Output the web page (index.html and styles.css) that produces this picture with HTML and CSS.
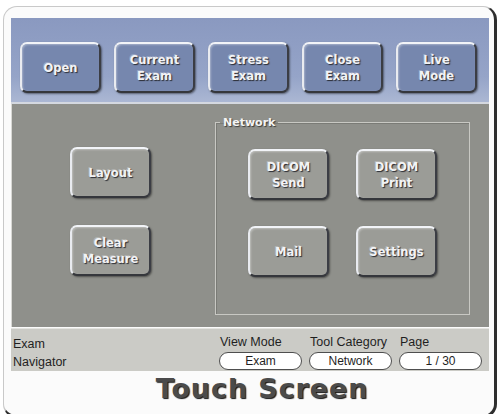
FILE: index.html
```html
<!DOCTYPE html>
<html lang="en">
<head>
    <meta charset="UTF-8">
    <meta name="viewport" content="width=device-width, initial-scale=1.0">
    <title>Touch Screen</title>
    <link rel="stylesheet" href="styles.css">
</head>
<body>

<div class="frame">
    <div class="toolbar">
        <button class="btn blue">Open</button>
        <button class="btn blue">Current<br>Exam</button>
        <button class="btn blue">Stress<br>Exam</button>
        <button class="btn blue">Close<br>Exam</button>
        <button class="btn blue">Live<br>Mode</button>
    </div>

    <div class="workspace">
        <div class="tools">
            <button class="btn gray">Layout</button>
            <button class="btn gray">Clear<br>Measure</button>
        </div>

        <fieldset class="group">
            <legend>Network</legend>
            <div class="grid">
                <button class="btn gray">DICOM<br>Send</button>
                <button class="btn gray">DICOM<br>Print</button>
                <button class="btn gray">Mail</button>
                <button class="btn gray">Settings</button>
            </div>
        </fieldset>
    </div>

    <div class="status">
        <div class="nav">Exam<br>Navigator</div>
        <div class="field">
            <span>View Mode</span>
            <div class="pill">Exam</div>
        </div>
        <div class="field">
            <span>Tool Category</span>
            <div class="pill">Network</div>
        </div>
        <div class="field">
            <span>Page</span>
            <div class="pill">1 / 30</div>
        </div>
    </div>

    <h1 class="caption">Touch Screen</h1>
</div>

</body>
</html>
```

FILE: styles.css
```css
body {
    margin: 0;
    background: #fff;
    font-family: "Liberation Sans", Arial, sans-serif;
}
.frame {
    margin: 6px 4px 4px 3px;
    height: 397px;
    padding: 11px 5px 0 7px;
    background: #fbfbfb;
    border: 1px solid #c9c9c9;
    border-right: 3px solid #2e2e2e;
    border-bottom: 3px solid #2e2e2e;
    border-radius: 14px;
}

/* top row of blue mode buttons */
.toolbar {
    display: flex;
    justify-content: space-between;
    height: 86px;
    padding: 24px 12px 0 9px;
    box-sizing: border-box;
    background: linear-gradient(#8a99c0, #95a4c8 70%, #abb7d3);
    border-bottom: 2px solid #d4d8e0;
}

.btn {
    width: 81px;
    height: 51px;
    padding: 0;
    border: 2px solid;
    border-color: #f2f4f8 #3b3d44 #35373c #e9ebf0;
    border-radius: 7px;
    font-family: "DejaVu Sans", Verdana, sans-serif;
    font-weight: bold;
    font-size: 11.5px;
    line-height: 16px;
    color: #f2f3f6;
    text-shadow: 1px 1px 1px #2a2c33, -1px -1px 0 rgba(255, 255, 255, 0.25);
    box-shadow: 1px 1px 2px rgba(0, 0, 0, 0.45), inset 1px 1px 2px rgba(255, 255, 255, 0.35);
    cursor: pointer;
}
.btn.blue {
    background: #7687ae;
}
.btn.gray {
    background: #9b9c97;
}

/* grey work area */
.workspace {
    display: flex;
    height: 223px;
    background: #8f908b;
    border-left: 1px solid #d8d8d4;
}
.tools {
    display: flex;
    flex-direction: column;
    gap: 27px;
    width: 145px;
    padding: 43px 0 0 58px;
}

.group {
    margin: 12px 0 12px 0;
    width: 253px;
    padding: 0;
    border: 1px solid #c8c8c3;
    box-shadow: inset 1px 1px 0 #7a7b76;
}
.group legend {
    margin-left: 4px;
    padding: 0 3px;
    font-family: "DejaVu Sans", Verdana, sans-serif;
    font-weight: bold;
    font-size: 11px;
    color: #f4f4f4;
    text-shadow: 1px 1px 1px #3c3c3a;
}
.grid {
    display: grid;
    grid-template-columns: 81px 81px;
    column-gap: 27px;
    row-gap: 26px;
    padding: 20px 0 0 32px;
}

/* status bar under the work area */
.status {
    display: flex;
    align-items: flex-start;
    height: 43px;
    margin-top: 1px;
    padding: 6px 0 0 2px;
    box-sizing: border-box;
    background: #cbcbc6;
    border-top: 1px solid #e4e4e0;
    font-size: 12.5px;
    color: #1f1f1f;
}
.nav {
    width: 206px;
    line-height: 18px;
}
.field {
    margin-right: 7px;
}
.field span {
    display: block;
    padding-left: 1px;
    line-height: 14px;
}
.pill {
    width: 81px;
    height: 16px;
    margin-top: 3px;
    line-height: 16px;
    font-size: 12px;
    text-align: center;
    background: #fff;
    border: 1px solid #4e4e4e;
    border-radius: 9px;
}

.caption {
    margin: 3px 0 0 24px;
    text-align: center;
    font-family: "DejaVu Sans", Verdana, sans-serif;
    font-weight: bold;
    font-size: 27px;
    line-height: 30px;
    letter-spacing: 0.9px;
    color: #4b4b4b;
    text-shadow: 1px 1px 1px #141414;
}
```
